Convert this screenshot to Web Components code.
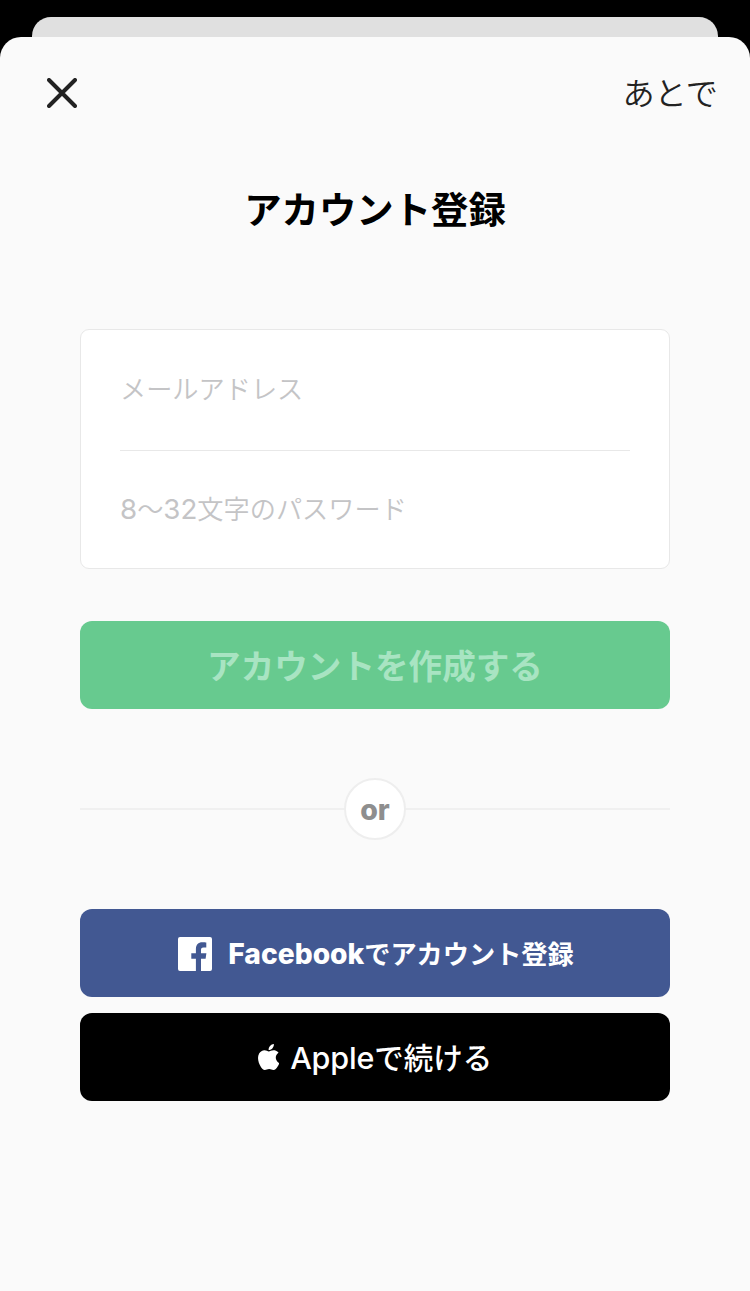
<!DOCTYPE html>
<html lang="ja">
<head>
<meta charset="utf-8">
<title>アカウント登録</title>
<style>
html, body { margin: 0; background: #000; }
body { font-family: Inter, "Noto Sans CJK JP", sans-serif; }
.create { --bg: #67ca8f; --fg: #a8e4c2; --size: 33.600px; --drop: 4px; margin-top: 52px; }
.fb { --bg: #425892; --size: 26.200px; --latin: 28.200px; --latin-weight: 800; --gap: 16px; --drop: 4px; --nudge: 2px; }
.apple { --bg: #000; --size: 29.500px; --weight: 500; --latin: 30.500px; --latin-weight: 450; --latin-spacing: -.15px; --gap: 11.500px; --drop: 2px; --icon-lift: 2px; margin-top: 16px; }
</style>
</head>
<body>
<modal-sheet>
  <sheet-header slot="header">あとで</sheet-header>
  <page-title>アカウント登録</page-title>
  <field-card>
    <field-row>メールアドレス</field-row>
    <field-row><field-digits>8</field-digits>〜<field-digits>32</field-digits>文字のパスワード</field-row>
  </field-card>
  <wide-button class="create">アカウントを作成する</wide-button>
  <or-divider>or</or-divider>
  <wide-button class="fb"><svg slot="icon" width="34" height="34" viewBox="0 0 34 34"><path fill="#fff" d="M2 0h30a2 2 0 0 1 2 2v30a2 2 0 0 1-2 2h-9V21.700h4.600l.8-5.500h-5.400v-3.300c0-1.500.4-2.500 2.500-2.500h2.800V5.500c-.5-.1-2.100-.2-4-.2-4 0-6.400 2.400-6.400 6.900v4h-4.600v5.500h4.600V34H2a2 2 0 0 1-2-2V2a2 2 0 0 1 2-2z"/></svg><span slot="latin">Facebook</span>でアカウント登録</wide-button>
  <wide-button class="apple"><svg slot="icon" width="21" height="26" viewBox="2.200 0 19.300 24" preserveAspectRatio="none"><path fill="#fff" d="M12.152 6.896c-.948 0-2.415-1.078-3.960-1.040-2.040.027-3.910 1.183-4.961 3.014-2.117 3.675-.546 9.103 1.519 12.090 1.013 1.454 2.208 3.090 3.792 3.039 1.520-.065 2.090-.987 3.935-.987 1.831 0 2.350.987 3.960.948 1.637-.026 2.676-1.480 3.676-2.948 1.156-1.688 1.636-3.325 1.662-3.415-.039-.013-.9-.4-1.700-1.257-.9-1-1.500-2.200-1.520-3.600-.026-3.040 2.480-4.494 2.597-4.559-1.429-2.090-3.623-2.324-4.390-2.376-2-.156-3.675 1.090-4.610 1.090zM15.530 3.830c.843-1.012 1.400-2.427 1.245-3.830-1.207.052-2.662.805-3.532 1.818-.780.896-1.454 2.338-1.273 3.714 1.338.104 2.715-.688 3.559-1.701"/></svg><span slot="latin">Apple</span>で続ける</wide-button>
</modal-sheet>
<script>
function define(name, html) {
  customElements.define(name, class extends HTMLElement {
    constructor() {
      super();
      this.attachShadow({ mode: 'open' }).innerHTML = html;
    }
  });
}

define('modal-sheet', `<style>
:host { display: flex; flex-direction: column; box-sizing: border-box; height: 1291px; padding-top: 17px; background: #000; overflow: hidden; }
.behind { height: 20px; flex: none; margin: 0 32px; background: #e0e0e0; border-radius: 19px 19px 0 0; }
.sheet { flex: 1; background: #fafafa; border-radius: 21px 21px 0 0; }
.content { padding: 0 80px; }
</style><div class="behind"></div><div class="sheet"><slot name="header"></slot><div class="content"><slot></slot></div></div>`);

define('sheet-header', `<style>
:host { display: flex; justify-content: space-between; align-items: center; height: 112px; padding: 0 32px 0 47px; color: #222; font-size: 32.200px; line-height: 40px; font-weight: 350; }
svg { display: block; }
span { padding-top: 1px; }
</style><svg width="30" height="30" viewBox="0 0 30 30"><path d="M2 2l26 26M28 2L2 28" stroke="#222" stroke-width="4" stroke-linecap="round"/></svg><span><slot></slot></span>`);

define('page-title', `<style>
:host { display: block; height: 50px; padding-top: 37px; text-align: center; color: #000; font-size: 37.400px; line-height: 50px; font-weight: 700; }
</style><slot></slot>`);

define('field-card', `<style>
:host { display: block; box-sizing: border-box; height: 240px; margin-top: 93px; padding: 0 39px; background: #fff; border: 1px solid #e8e8e8; border-radius: 9px; }
::slotted(:last-child) { border-top: 1px solid #e8e8e8; }
</style><slot></slot>`);

define('field-row', `<style>
:host { display: flex; align-items: center; box-sizing: border-box; height: 119px; color: #c4c4c6; font-size: 26.200px; line-height: 40px; font-weight: 350; }
:host(:first-child) { height: 120px; }
</style><span><slot></slot></span>`);

define('field-digits', `<style>
:host { display: inline; font-size: 27.700px; font-weight: 400; line-height: 1; }
</style><slot></slot>`);

define('wide-button', `<style>
:host { display: flex; align-items: center; justify-content: center; box-sizing: border-box; height: 88px; padding-left: var(--nudge, 0); border-radius: 12px; background: var(--bg); color: var(--fg, #fff); font-size: var(--size); line-height: 44px; font-weight: var(--weight, 700); }
.icon { display: flex; margin-right: var(--gap, 0); padding-top: 2px; padding-bottom: var(--icon-lift, 0px); }
.label { white-space: nowrap; padding-top: var(--drop); }
::slotted([slot=latin]) { font-size: var(--latin); font-weight: var(--latin-weight); letter-spacing: var(--latin-spacing, 0); line-height: 1; }
</style><span class="icon"><slot name="icon"></slot></span><span class="label"><slot name="latin"></slot><slot></slot></span>`);

define('or-divider', `<style>
:host { display: flex; align-items: center; height: 62px; margin: 69px 0; color: #8e8e8e; font-size: 28.500px; line-height: 60px; font-weight: 800; }
:host::before, :host::after { content: ""; flex: 1; height: 2px; background: #f0f0f0; }
.dot { box-sizing: border-box; width: 62px; height: 62px; border: 2px solid #eee; border-radius: 50%; background: #fff; text-align: center; }
</style><span class="dot"><slot></slot></span>`);
</script>
</body>
</html>
